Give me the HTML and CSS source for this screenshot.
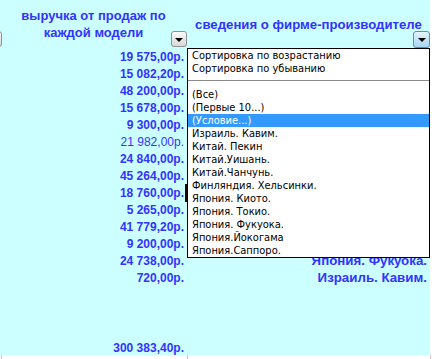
FILE: index.html
```html
<!DOCTYPE html>
<html lang="ru">
<head>
<meta charset="utf-8">
<link rel="stylesheet" href="styles.css">
</head>
<body>
<div class="sheet">
  <div class="grid">
    <div class="hdr hdr1">
      <span class="htext">выручка от продаж по<br>каждой модели</span>
      <span class="fbtn prev"><i></i></span>
      <span class="fbtn b1"><i></i></span>
    </div>
    <div class="hdr hdr2">
      <span class="htext">сведения о фирме-производителе</span>
      <span class="fbtn b2 hot"><i></i></span>
    </div>

    <div class="num">19 575,00р.</div><div class="firm"></div>
    <div class="num">15 082,20р.</div><div class="firm"></div>
    <div class="num">48 200,00р.</div><div class="firm"></div>
    <div class="num">15 678,00р.</div><div class="firm"></div>
    <div class="num">9 300,00р.</div><div class="firm"></div>
    <div class="num plain">21 982,00р.</div><div class="firm"></div>
    <div class="num">24 840,00р.</div><div class="firm"></div>
    <div class="num">45 264,00р.</div><div class="firm"></div>
    <div class="num">18 760,00р.</div><div class="firm"></div>
    <div class="num">5 265,00р.</div><div class="firm"></div>
    <div class="num">41 779,20р.</div><div class="firm"></div>
    <div class="num">9 200,00р.</div><div class="firm"></div>
    <div class="num">24 738,00р.</div><div class="firm">Япония. Фукуока.</div>
    <div class="num">720,00р.</div><div class="firm">Израиль. Кавим.</div>
    <div class="num"></div><div class="firm"></div>
    <div class="num"></div><div class="firm"></div>
    <div class="num"></div><div class="firm"></div>
    <div class="num total">300 383,40р.</div><div class="firm total"></div>
  </div>

  <span class="cursor-mark"></span>

  <div class="dropdown">
    <div class="item">Сортировка по возрастанию</div>
    <div class="item">Сортировка по убыванию</div>
    <div class="sep"></div>
    <div class="item">(Все)</div>
    <div class="item">(Первые 10...)</div>
    <div class="item sel">(Условие...)</div>
    <div class="item">Израиль. Кавим.</div>
    <div class="item">Китай. Пекин</div>
    <div class="item">Китай.Уишань.</div>
    <div class="item">Китай.Чанчунь.</div>
    <div class="item">Финляндия. Хельсинки.</div>
    <div class="item">Япония. Киото.</div>
    <div class="item">Япония. Токио.</div>
    <div class="item">Япония. Фукуока.</div>
    <div class="item">Япония.Йокогама</div>
    <div class="item">Япония.Саппоро.</div>
  </div>
</div>
<div class="below">
  <span class="tick t0"></span>
  <span class="tick t1"></span>
  <span class="tick t2"></span>
</div>
</body>
</html>
```

FILE: styles.css
```css
html, body {
  margin: 0;
  padding: 0;
  background: #ffffff;
}

body {
  width: 432px;
  height: 359px;
  overflow: hidden;
  font-family: "Liberation Sans", Arial, sans-serif;
}

.sheet {
  position: relative;
  width: 430px;
  height: 355px;
  background: #ccffff;
}

.grid {
  display: grid;
  grid-template-columns: 187px 243px;
  grid-template-rows: 48px repeat(17, 17px) 18px;
}

.hdr {
  position: relative;
  display: flex;
  align-items: center;
  justify-content: center;
  text-align: center;
  color: #3333ff;
  font-weight: bold;
  font-size: 13px;
  line-height: 17px;
}

.hdr1 .htext {
  margin-top: -1px;
}

.hdr2 .htext {
  font-size: 13.2px;
}

.num, .firm {
  display: flex;
  align-items: center;
  justify-content: flex-end;
  padding-right: 3px;
  color: #3333ff;
  font-weight: bold;
  font-size: 12px;
  white-space: nowrap;
}

.firm {
  font-size: 13.3px;
}

.num.plain {
  font-weight: normal;
}

.num.total {
  align-items: flex-end;
  padding-bottom: 0;
}

.fbtn {
  position: absolute;
  bottom: 1px;
  width: 16px;
  height: 16px;
  box-sizing: border-box;
  border: 1px solid #8e8f8f;
  border-radius: 3px;
  background: linear-gradient(#fbfbfb, #e4e4e4 60%, #d9d9d9);
}

.fbtn i {
  position: absolute;
  left: 3px;
  top: 6px;
  width: 0;
  height: 0;
  border-left: 4px solid transparent;
  border-right: 4px solid transparent;
  border-top: 4px solid #000000;
}

.fbtn.b1 {
  right: 0;
}

.fbtn.prev {
  left: -14px;
}

.fbtn.b2 {
  right: 0;
  width: 17px;
  height: 17px;
  bottom: 0;
}

.fbtn.b2 i {
  left: 4px;
  top: 6px;
}

.fbtn.hot {
  border-color: #5b8fb8;
  background: linear-gradient(#e6f4fd, #bfe2f8 55%, #a9d6f4);
}

.cursor-mark {
  position: absolute;
  left: 185px;
  top: 184px;
  width: 2px;
  height: 18px;
  background: #200a00;
}

.dropdown {
  position: absolute;
  left: 187px;
  top: 48px;
  width: 243px;
  height: 210px;
  box-sizing: border-box;
  border: 1px solid #000000;
  background: #ffffff;
  font-family: "DejaVu Sans Condensed", "Liberation Sans", Tahoma, sans-serif;
  font-size: 11px;
  color: #000000;
}

.item {
  height: 13px;
  line-height: 13px;
  padding-left: 4px;
  white-space: nowrap;
}

.item.sel {
  background: #3399ff;
  color: #ffffff;
}

.sep {
  height: 1px;
  margin: 5px 0 7px 0;
  background: #8a8a8a;
}

.below {
  position: relative;
  height: 4px;
  width: 432px;
}

.tick {
  position: absolute;
  top: 0;
  width: 1px;
  height: 4px;
  background: #c8c8c8;
}

.t0 { left: 1px; }
.t1 { left: 187px; }
.t2 { left: 430px; }
```
